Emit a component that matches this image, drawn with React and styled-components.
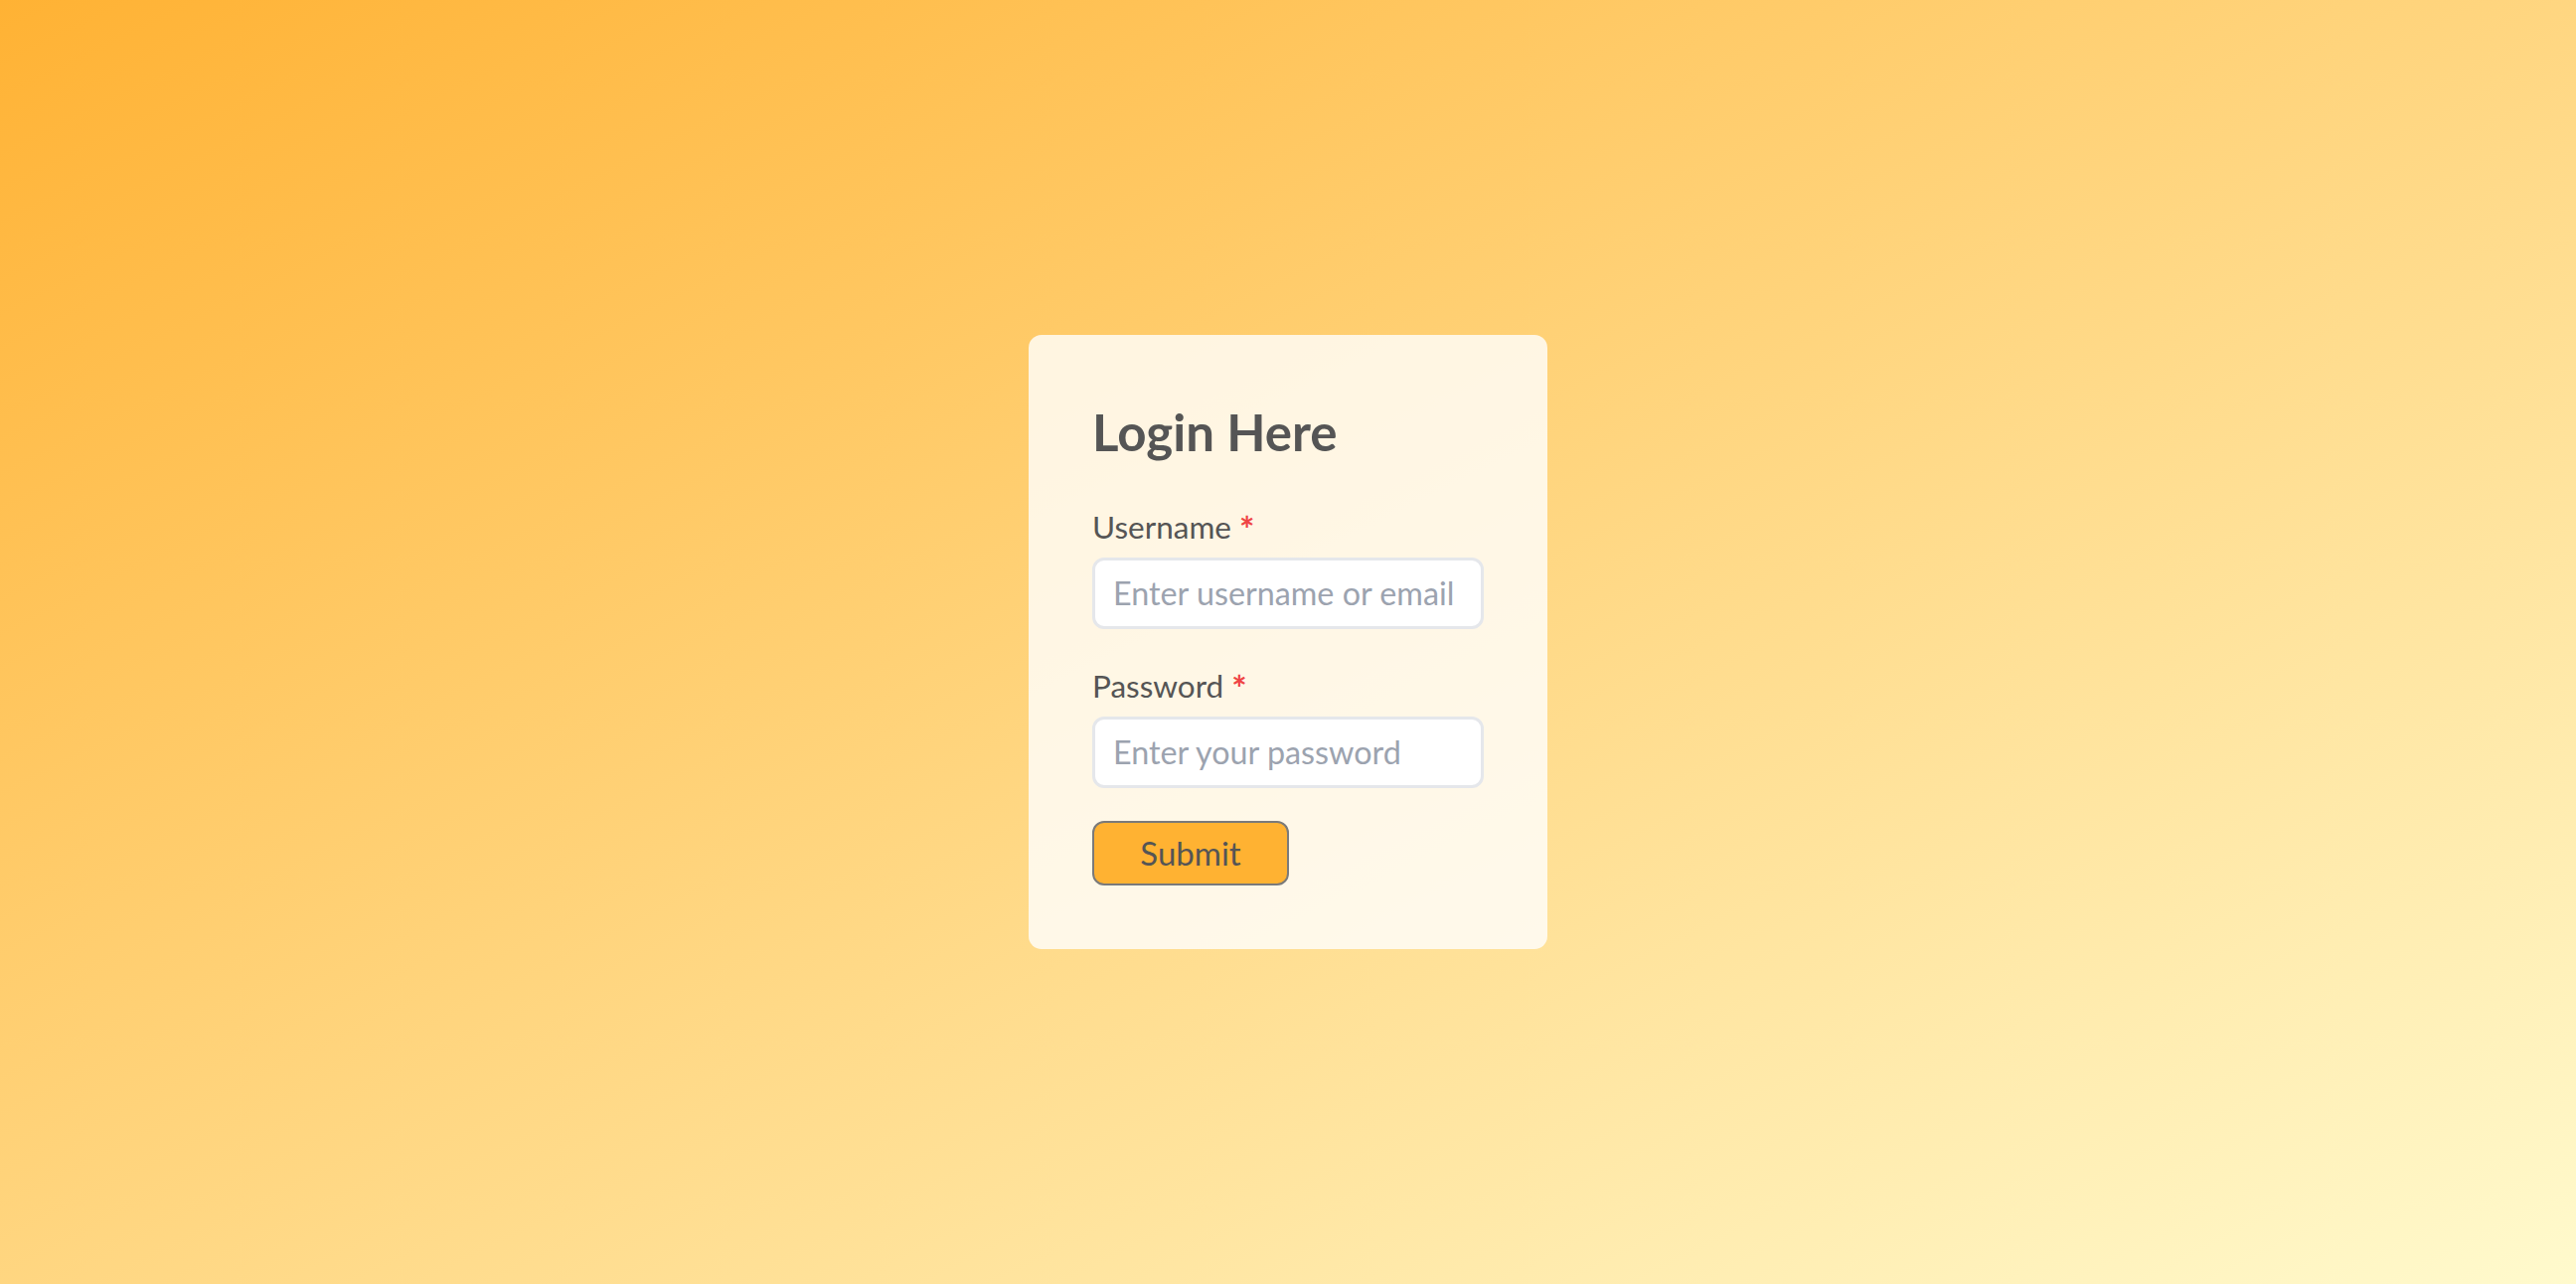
import React from "react";
import styled, { createGlobalStyle } from "styled-components";

const GlobalStyle = createGlobalStyle`
  * { box-sizing: border-box; }
  html, body { margin: 0; padding: 0; }
  body {
    font-family: Lato, "Open Sans", sans-serif;
    background: linear-gradient(to bottom right, #ffb234, #fffacd);
    min-height: 100vh;
  }
`;

const Page = styled.main`
  min-height: 100vh;
  display: flex;
  align-items: center;
  justify-content: center;
`;

const Card = styled.form`
  width: 522px;
  padding: 67.5px 64px 64px;
  border-radius: 13px;
  background: rgba(255, 255, 255, 0.8);
  display: flex;
  flex-direction: column;
`;

const Title = styled.h1`
  margin: 0 0 47px;
  font-size: 51px;
  line-height: 60px;
  font-weight: 700;
  color: #555555;
`;

const Field = styled.div`
  display: flex;
  flex-direction: column;
  gap: 12px;
  margin-bottom: ${(p) => (p.$last ? 33 : 39)}px;
`;

const Label = styled.label`
  font-size: 31.5px;
  line-height: 37px;
  color: #555555;
`;

const Required = styled.span`
  color: #ef4444;
  font-weight: 700;
  font-size: 1.15em;
  line-height: 0;
  vertical-align: -4px;
`;

const Input = styled.input`
  width: 100%;
  height: 72px;
  border: 3px solid #e5e7eb;
  border-radius: 12px;
  background: #ffffff;
  padding: 0 18px;
  font-family: Lato, "Open Sans", sans-serif;
  font-size: 32.3px;
  color: #374151;
  outline: none;
  &::placeholder {
    color: #9ca3af;
  }
`;

const Button = styled.button`
  align-self: flex-start;
  width: 198px;
  height: 65px;
  border: 2px solid #7a7a7a;
  border-radius: 12px;
  background: #ffb232;
  color: #555555;
  font-family: Lato, "Open Sans", sans-serif;
  font-size: 33px;
  cursor: pointer;
`;

export default function App() {
  return (
    <>
      <GlobalStyle />
      <Page>
        <Card onSubmit={(e) => e.preventDefault()}>
          <Title>Login Here</Title>
          <Field>
            <Label htmlFor="username">
              Username <Required>*</Required>
            </Label>
            <Input id="username" type="text" placeholder="Enter username or email" />
          </Field>
          <Field $last>
            <Label htmlFor="password">
              Password <Required>*</Required>
            </Label>
            <Input id="password" type="password" placeholder="Enter your password" />
          </Field>
          <Button type="submit">Submit</Button>
        </Card>
      </Page>
    </>
  );
}
